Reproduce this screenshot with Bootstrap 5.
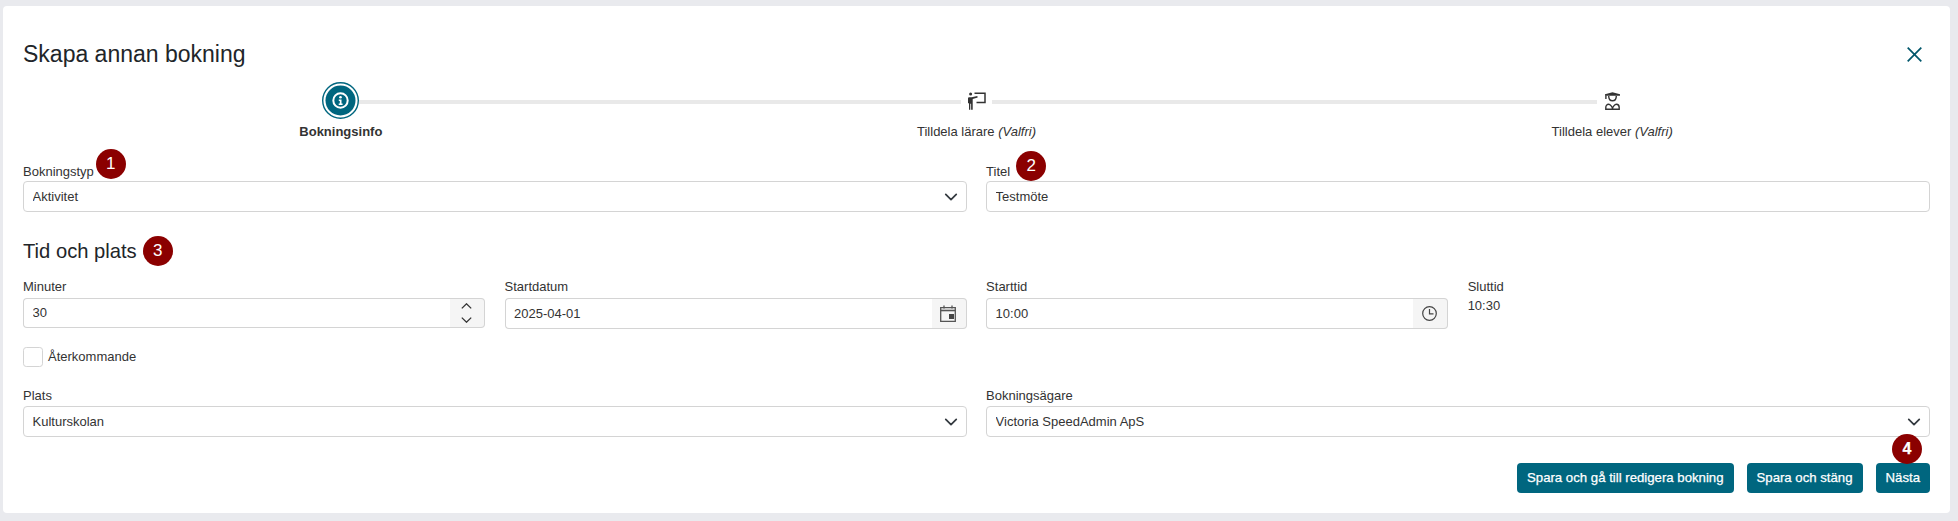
<!DOCTYPE html>
<html lang="sv">
<head>
    <meta charset="UTF-8">
    <meta name="viewport" content="width=device-width, initial-scale=1.0">
    <title>Skapa annan bokning</title>
    <link href="https://cdn.jsdelivr.net/npm/bootstrap@5.3.0/dist/css/bootstrap.min.css" rel="stylesheet">
    <style>
        body {
            background-color: #e9eaee;
            font-family: "Liberation Sans", Arial, sans-serif;
            font-size: 13px;
            color: #333;
            padding: 6px 8px 8px 3px;
        }
        .booking-card {
            border: 0;
            border-radius: 4px;
            padding: 35px 20px 20px;
        }
        .page-title {
            font-size: 23px;
            line-height: 26px;
            font-weight: 400;
            color: #212529;
            margin: 0;
        }
        .close-x { display: block; margin-right: 8px; }

        /* stepper */
        .stepper { margin-top: 15px; }
        .step { flex: 1 1 0; min-width: 0; text-align: center; }
        .step-head { height: 37px; display: flex; align-items: center; }
        .step-line { flex: 1 1 0; height: 4px; margin-top: 2px; background: #e9e9e9; }
        .step-blank { flex: 1 1 0; }
        .step-icon { display: block; flex: none; }
        .step-gap-2 { width: 31px; }
        .step-label { margin-top: 5px; line-height: 16px; font-size: 13px; }
        .step-label.active { font-weight: 700; }

        /* form */
        .form-row-tight { --bs-gutter-x: 19.2px; }
        .fld-label {
            display: block;
            font-size: 13px;
            line-height: 16px;
            margin-bottom: 1px;
            color: #333;
        }
        .form-control, .form-select, .input-group-text {
            font-size: 13px;
            border-color: #d4d4d4;
            border-radius: 4px;
            color: #333;
        }
        .form-control, .form-select {
            height: 31px;
            min-height: 0;
            padding: 0 8.5px;
        }
        .form-select {
            background-position: right 6px center;
            background-size: 18px 14px;
        }
        .input-group .form-control { border-right: 0; }
        .input-group-text {
            width: 36px;
            padding: 0;
            justify-content: center;
            background-color: #f5f5f5;
            border-left: 0;
        }
        .spin-group .form-control { height: 30px; padding-bottom: 2px; }
        .spin-addon { flex-direction: column; gap: 8px; height: 30px; }
        .section-title {
            font-size: 20.2px;
            line-height: 26px;
            font-weight: 400;
            color: #212529;
            margin: 0;
        }
        .row-first { margin-top: 24px; }
        .row-title { margin-top: 24px; gap: 6px; }
        .row-time { margin-top: 13px; }
        .row-time .fld-label { margin-bottom: 3px; }
        .row-repeat { margin-top: 18px; }
        .row-place { margin-top: 21px; }
        .row-place .fld-label { margin-bottom: 2px; }
        .end-time { line-height: 16px; margin-top: 1px; }
        .repeat-box {
            width: 20px;
            height: 20px;
            margin: 0;
            border-color: #d4d4d4;
            border-radius: 4px;
        }
        .repeat-label { margin-left: 5px; line-height: 16px; }

        /* numbered markers */
        .marker {
            width: 30px;
            height: 30px;
            border-radius: 50%;
            background-color: #8b0000;
            color: #fff;
            font-size: 17px;
            line-height: 30px;
            text-align: center;
        }
        .marker-over { position: absolute; }
        .marker-1 { left: 100%; top: -15px; margin-left: 2px; }
        .marker-2 { left: 100%; top: -13px; margin-left: 6px; }
        .marker-4 { right: 8px; top: -29px; font-weight: 700; font-size: 16px; }

        /* actions */
        .actions { margin-top: 26px; gap: 13px; }
        .btn-save {
            position: relative;
            height: 30px;
            padding: 0 10px;
            font-size: 13.2px;
            line-height: 30px;
            border: 0;
            border-radius: 4px;
            background-color: #00667f;
            color: #fff;
            -webkit-text-stroke: .25px #fff;
        }
        .btn-save:hover { background-color: #00566b; color: #fff; }
    </style>
</head>
<body>
    <div class="card booking-card">
        <div class="d-flex justify-content-between align-items-center">
            <h1 class="page-title">Skapa annan bokning</h1>
            <svg class="close-x" width="15" height="15" viewBox="0 0 15 15" fill="none" stroke="#00566b" stroke-width="1.7">
                <path d="M.7.7l13.6 13.6M14.3.7L.7 14.3"/>
            </svg>
        </div>

        <!-- Steg -->
        <div class="stepper d-flex">
            <div class="step">
                <div class="step-head">
                    <div class="step-blank"></div>
                    <svg class="step-icon" width="37" height="37" viewBox="0 0 37 37">
                        <circle cx="18.5" cy="18.5" r="17.8" fill="#fff" stroke="#00667f" stroke-width="1.4"/>
                        <circle cx="18.5" cy="18.5" r="15" fill="#00667f"/>
                        <circle cx="18.5" cy="18.5" r="7.2" fill="none" stroke="#fff" stroke-width="2"/>
                        <circle cx="18.5" cy="15.2" r="1.3" fill="#fff"/>
                        <path d="M16.8 17.6h2.7v4h1.1v1.3h-3.9v-1.3h1.1v-2.7h-1z" fill="#fff"/>
                    </svg>
                    <div class="step-line"></div>
                </div>
                <div class="step-label active">Bokningsinfo</div>
            </div>
            <div class="step">
                <div class="step-head">
                    <div class="step-line"></div>
                    <div class="step-gap-2 d-flex justify-content-center">
                        <svg class="step-icon" width="19" height="18" viewBox="0 0 19 18">
                            <circle cx="3.6" cy="2" r="1.5" fill="#333"/>
                            <path d="M7.500 1.200H18v9.300H9.500" fill="none" stroke="#333" stroke-width="1.500"/>
                            <path d="M1 6.500c0-.8.6-1.200 1.300-1.200h2.400l5.600-1.300.4 1.400-5 1.500v10.900H4.100v-6H3.300v6H2v-6.500H1z" fill="#333"/>
                        </svg>
                    </div>
                    <div class="step-line"></div>
                </div>
                <div class="step-label">Tilldela lärare <em>(Valfri)</em></div>
            </div>
            <div class="step">
                <div class="step-head">
                    <div class="step-line"></div>
                    <div class="step-gap-2 d-flex justify-content-center">
                        <svg class="step-icon" width="15" height="18" viewBox="0 0 15 18" fill="none" stroke="#333">
                            <path d="M0 2.200L7.500.3 15 2.200v1.600H0z" fill="#333" stroke="none"/>
                            <path d="M.9 3.500v3.500M3.700 4c0 6.400 7.600 6.400 7.600 0" stroke-width="1.400"/>
                            <path d="M.8 17.200v-1.700c0-2 1.300-3.300 2.800-3.300 1.600 0 3.900 3 3.900 4.600 0-1.600 2.300-4.600 3.900-4.600 1.500 0 2.800 1.300 2.800 3.300v1.700z" stroke-width="1.400"/>
                        </svg>
                    </div>
                    <div class="step-blank"></div>
                </div>
                <div class="step-label">Tilldela elever <em>(Valfri)</em></div>
            </div>
        </div>

        <!-- Typ och titel -->
        <div class="row form-row-tight row-first">
            <div class="col-6">
                <label class="fld-label" for="bookingType"><span class="position-relative d-inline-block">Bokningstyp<span class="marker marker-over marker-1">1</span></span></label>
                <select class="form-select" id="bookingType"><option>Aktivitet</option></select>
            </div>
            <div class="col-6">
                <label class="fld-label" for="bookingTitle"><span class="position-relative d-inline-block">Titel<span class="marker marker-over marker-2">2</span></span></label>
                <input type="text" class="form-control" id="bookingTitle" value="Testmöte">
            </div>
        </div>

        <div class="d-flex align-items-center row-title">
            <h2 class="section-title">Tid och plats</h2>
            <span class="marker">3</span>
        </div>

        <!-- Tid -->
        <div class="row form-row-tight row-time">
            <div class="col-3">
                <label class="fld-label" for="minutes">Minuter</label>
                <div class="input-group spin-group">
                    <input type="text" class="form-control" id="minutes" value="30">
                    <span class="input-group-text spin-addon">
                        <svg width="11" height="6" viewBox="0 0 11 6" fill="none" stroke="#333" stroke-width="1.3"><path d="M.8 5.400l4.700-4.600 4.700 4.600"/></svg>
                        <svg width="11" height="6" viewBox="0 0 11 6" fill="none" stroke="#333" stroke-width="1.3"><path d="M.8.600l4.700 4.600 4.700-4.600"/></svg>
                    </span>
                </div>
            </div>
            <div class="col-3">
                <label class="fld-label" for="startDate">Startdatum</label>
                <div class="input-group">
                    <input type="text" class="form-control" id="startDate" value="2025-04-01">
                    <span class="input-group-text">
                        <svg width="16" height="17" viewBox="0 0 16 17" fill="none" stroke="#555" stroke-width="1.300">
                            <path d="M.7 2.700h14.600v13.600H.7z"/>
                            <path d="M.7 5.500h14.600" stroke-width="1.600"/>
                            <path d="M4 .5v3M12 .5v3"/>
                            <rect x="9" y="9" width="5" height="5" fill="#444" stroke="none"/>
                        </svg>
                    </span>
                </div>
            </div>
            <div class="col-3">
                <label class="fld-label" for="startTime">Starttid</label>
                <div class="input-group">
                    <input type="text" class="form-control" id="startTime" value="10:00">
                    <span class="input-group-text">
                        <svg width="15" height="15" viewBox="0 0 15 15" fill="none" stroke="#444" stroke-width="1.200">
                            <circle cx="7.500" cy="7.500" r="6.800"/>
                            <path d="M7.500 3v4.800h4"/>
                        </svg>
                    </span>
                </div>
            </div>
            <div class="col-3">
                <div class="fld-label">Sluttid</div>
                <div class="end-time">10:30</div>
            </div>
        </div>

        <div class="d-flex align-items-center row-repeat">
            <input class="form-check-input repeat-box" type="checkbox" id="repeat">
            <label class="repeat-label" for="repeat">Återkommande</label>
        </div>

        <!-- Plats och ägare -->
        <div class="row form-row-tight row-place">
            <div class="col-6">
                <label class="fld-label" for="place">Plats</label>
                <select class="form-select" id="place"><option>Kulturskolan</option></select>
            </div>
            <div class="col-6">
                <label class="fld-label" for="owner">Bokningsägare</label>
                <select class="form-select" id="owner"><option>Victoria SpeedAdmin ApS</option></select>
            </div>
        </div>

        <div class="d-flex justify-content-end actions">
            <button type="button" class="btn btn-save">Spara och gå till redigera bokning</button>
            <button type="button" class="btn btn-save">Spara och stäng</button>
            <button type="button" class="btn btn-save">Nästa<span class="marker marker-over marker-4">4</span></button>
        </div>
    </div>
    <script src="https://cdn.jsdelivr.net/npm/bootstrap@5.3.0/dist/js/bootstrap.bundle.min.js"></script>
</body>
</html>
